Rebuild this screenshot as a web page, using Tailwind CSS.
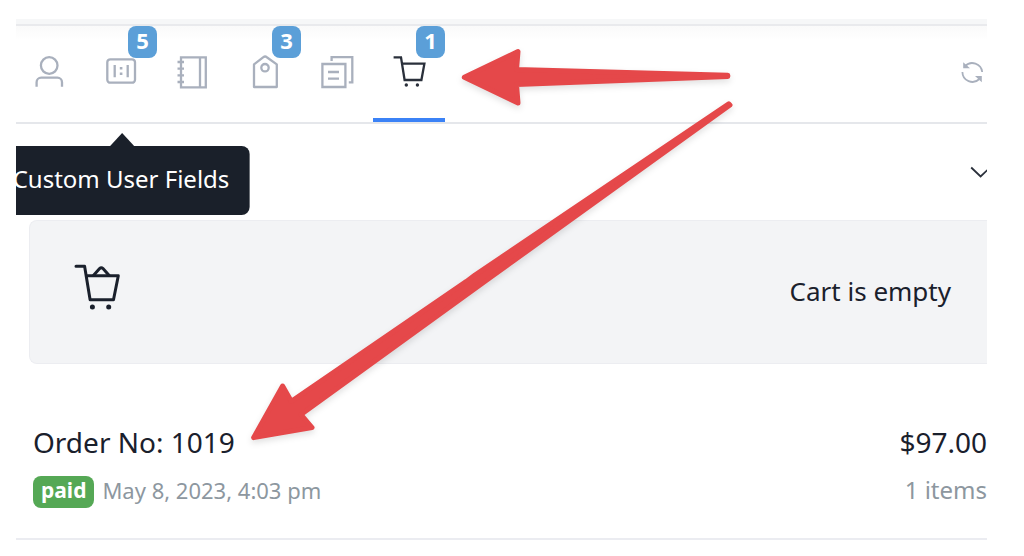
<!DOCTYPE html>
<html lang="en">
<head>
  <meta charset="UTF-8">
  <meta name="viewport" content="width=device-width, initial-scale=1.0">
  <title>Orders</title>
  <script src="https://cdn.jsdelivr.net/npm/@tailwindcss/browser@4"></script>
</head>
<body class="relative bg-white text-[#1a202c] font-['Noto_Sans',sans-serif] pt-[19px] pl-4 pr-[37px]">
  <main class="overflow-hidden">
    <div class="h-[7px] bg-[#f6f7f8] border-b-2 border-[#e9eaed]"></div>

    <!-- Tabs -->
    <nav class="flex items-center justify-between border-b-2 border-[#e5e7eb] bg-linear-to-b from-[#fafafa] to-white to-15%">
      <div class="flex -ml-[3px] text-[#a9b0bd]">
        <button type="button" aria-label="User" class="w-[72px] h-24 flex items-center justify-center border-b-4 border-transparent">
          <svg class="size-9" viewBox="0 0 36 36" fill="none" stroke="currentColor" stroke-width="2.3">
            <circle cx="18.2" cy="11.5" r="8.3" />
            <path d="M5.6 32.7v-4.4a4.6 4.6 0 0 1 4.6-4.6h16.2a4.6 4.6 0 0 1 4.6 4.6v4.4" />
          </svg>
        </button>
        <button type="button" aria-label="Custom User Fields" aria-describedby="fieldsTooltip" class="relative w-[72px] h-24 flex items-center justify-center border-b-4 border-transparent">
          <svg class="size-9" viewBox="0 0 36 36" fill="none" stroke="currentColor" stroke-width="2.3">
            <rect x="4.3" y="5.3" width="27.7" height="23.4" rx="3" />
            <path d="M11.7 11v12.3M24.7 11v12.3" />
            <path stroke-width="2.6" d="M16.8 14.3h2.6M16.8 19.7h2.6" />
          </svg>
          <span class="absolute top-0 right-0 w-[29px] h-8 rounded-lg bg-[#5b9fd8] text-white text-[22px] leading-7 font-bold text-center">5</span>
          <span id="fieldsTooltip" role="tooltip" class="absolute top-[120px] left-1/2 -translate-x-1/2 px-5 pb-1 rounded-lg bg-[#1a202a] text-white text-2xl leading-[65px] whitespace-nowrap">
            Custom User Fields
            <svg class="absolute -top-[13px] left-1/2 -translate-x-1/2 w-7 h-[14px] text-[#1a202a]" viewBox="0 0 28 14" fill="currentColor">
              <path d="M15.5 0l12 13v1h-24v-1z" />
            </svg>
          </span>
        </button>
        <button type="button" aria-label="Notes" class="w-[72px] h-24 flex items-center justify-center border-b-4 border-transparent">
          <svg class="size-9" viewBox="0 0 36 36" fill="none" stroke="currentColor" stroke-width="2.3">
            <path d="M6 3.3h24.8v30H6zM25 3.3v30" />
            <path d="M2.5 8H9M2.5 14.7H9M2.5 21.3H9M2.5 28H9" />
          </svg>
        </button>
        <button type="button" aria-label="Tags" class="relative w-[72px] h-24 flex items-center justify-center border-b-4 border-transparent">
          <svg class="size-9" viewBox="0 0 36 36" fill="none" stroke="currentColor" stroke-width="2.3" stroke-linejoin="round">
            <path d="M7 33V10.4L16.4 3.2a2.8 2.8 0 0 1 3.4 0L29.8 10.4V33z" />
            <circle cx="18" cy="13.7" r="3.7" />
          </svg>
          <span class="absolute top-0 right-0 w-[29px] h-8 rounded-lg bg-[#5b9fd8] text-white text-[22px] leading-7 font-bold text-center">3</span>
        </button>
        <button type="button" aria-label="Copies" class="w-[72px] h-24 flex items-center justify-center border-b-4 border-transparent">
          <svg class="size-9" viewBox="0 0 36 36" fill="none" stroke="currentColor" stroke-width="2.3">
            <path d="M3.4 10h23v23h-23zM9 18h11M9 24.7h11" />
            <path d="M12.6 7V3.2h20.7v25.2H29.8" />
          </svg>
        </button>
        <button type="button" aria-label="Cart" class="relative w-[72px] h-24 flex items-center justify-center border-b-4 border-[#3b82f6] text-[#2a303b]">
          <svg class="size-9" viewBox="0 0 36 36" fill="none" stroke="currentColor" stroke-width="2.3">
            <path d="M2.6 3.4h7.4l3.6 22.6h16.8l3-16.4H11" />
            <path stroke-width="3.4" stroke-linecap="round" d="M15.3 31h.01M26.4 31h.01" />
          </svg>
          <span class="absolute top-0 right-0 w-[29px] h-8 rounded-lg bg-[#5b9fd8] text-white text-[22px] leading-7 font-bold text-center">1</span>
        </button>
      </div>
      <button type="button" aria-label="Refresh" class="mr-[3px] mb-1 text-[#a9b0bd]">
        <svg class="size-6" viewBox="0 0 24 24" fill="none" stroke="currentColor" stroke-width="1.8">
          <path d="M5 6.2A10 10 0 0 1 22.2 12M2.4 12a10 10 0 0 0 17 7" />
          <path fill="currentColor" stroke="none" d="M3.2 2.2v6h6.8zM21.8 22.2v-6.2H15z" />
        </svg>
      </button>
    </nav>

    <!-- Cart -->
    <section class="pl-[13px]">
      <div class="flex justify-end items-center h-24">
        <button type="button" aria-label="Toggle cart" class="-mr-[6px] text-[#2a303b]">
          <svg class="size-6" viewBox="0 0 24 24" fill="none" stroke="currentColor" stroke-width="1.8">
            <path d="M2.2 7.5l9.4 9 9.4-9" />
          </svg>
        </button>
      </div>
      <div class="flex items-center justify-between h-36 pl-[43px] pr-9 pb-[2px] rounded-l-lg border border-r-0 border-[#ecedf1] bg-[#f3f4f6]">
        <svg class="w-12 h-14" viewBox="0 0 48 56" fill="none" stroke="currentColor" stroke-width="3">
          <path stroke-linecap="round" stroke-linejoin="round" d="M3 3.3h8.6l5.5 33.5h23.4l4.8-24H13.5" />
          <path d="M20.2 12.8l6.4-7.2c1.2-1.2 2.2-1.2 3.4 0l6.4 7.2" />
          <path stroke-width="5" stroke-linecap="round" d="M19.4 44h.01M35.7 44h.01" />
        </svg>
        <p class="text-[26px] leading-9">Cart is empty</p>
      </div>
    </section>

    <!-- Order -->
    <section class="mt-[54px] pl-[17px] pb-[30px] flex justify-between border-b-2 border-[#ebecf1]">
      <div>
        <h2 class="text-[28px] leading-12">Order No: 1019</h2>
        <div class="mt-[10px] flex items-start gap-2 text-[22px] leading-7 text-[#8d979f]">
          <span class="px-2 pb-1 rounded-lg bg-[#55a855] text-white text-[21px] leading-7 font-bold">paid</span>
          <time datetime="2023-05-08T16:03">May 8, 2023, 4:03 pm</time>
        </div>
      </div>
      <div class="text-right">
        <p class="text-[28px] leading-12">$97.00</p>
        <p class="mt-[10px] text-2xl leading-7 text-[#8d979f]">1 items</p>
      </div>
    </section>
  </main>

  <!-- Arrows -->
  <svg class="absolute top-0 left-0 w-[760px] h-[460px] pointer-events-none drop-shadow-md text-[#e5484a]" viewBox="0 0 760 460" fill="currentColor" stroke="currentColor" stroke-width="5" stroke-linejoin="round" aria-hidden="true">
    <path d="M464.3 77.3L518 51.6L516.5 69.5L727.8 75.2V76.6L516.5 84.5L518 103Z" />
    <path d="M253.6 437.6L282.6 386L291.4 401.4L466.5 281.4L475 275L728.8 103.9L730 105L491 277L301 414.5L312 427.5Z" />
  </svg>
</body>
</html>
